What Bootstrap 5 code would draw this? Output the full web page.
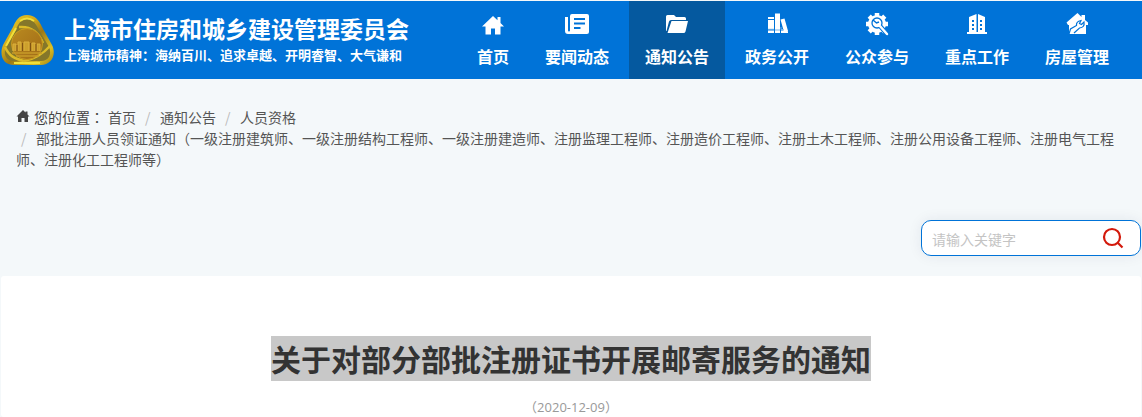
<!DOCTYPE html>
<html lang="zh-CN">
<head>
<meta charset="utf-8">
<meta name="viewport" content="width=device-width, initial-scale=1">
<title>关于对部分部批注册证书开展邮寄服务的通知</title>
<link href="https://cdn.jsdelivr.net/npm/bootstrap@5.3.0/dist/css/bootstrap.min.css" rel="stylesheet">
<style>
  body {
    background: #f4f8fa;
    color: #444;
    font-family: "Open Sans", "Noto Sans CJK SC", sans-serif;
    font-size: 14px;
    line-height: 21px;
  }
  .site-bar { background: #0073d8; border-top: 1px solid #f4f8fa; }
  .brand-link { color: #fff; font-family: "Noto Sans CJK SC", sans-serif; font-weight: 700; }
  .brand-title { font-size: 23px; line-height: 30px; }
  .brand-motto { font-size: 13px; line-height: 24px; }
  .main-menu { gap: 4px; padding-right: 17px; }
  .main-menu .nav-link {
    color: #fff;
    font: 700 16px/24px "Noto Sans CJK SC", sans-serif;
    padding: 11px 16px;
    gap: 8px;
  }
  .main-menu .nav-link:hover, .main-menu .nav-link.active { background: #05599f; }
  .main-menu svg { fill: currentColor; }
  .crumbs { padding: 28px 16px 0; font-family: "Noto Sans CJK SC", sans-serif; }
  .crumbs .breadcrumb { column-gap: 4px; margin: 0; }
  .crumbs a { color: #555; text-decoration: none; }
  .crumbs .breadcrumb-item + .breadcrumb-item { padding: 0; }
  .crumbs .breadcrumb-item + .breadcrumb-item::before {
    float: none; display: inline-block; width: 20px; padding: 0 0 0 5px; color: #bbb;
  }
  .finder {
    width: 220px; height: 36px; margin: 50px 1px 20px;
    border: 1px solid #0073d8; border-radius: 10px; background: #fff;
    box-shadow: 0 0 14px rgba(0, 40, 80, .08);
  }
  .finder input { font: 14px/20px "Noto Sans CJK SC", sans-serif; padding: 2px 0 0 10px; min-width: 0; }
  .finder input::placeholder { color: #c4c4c4; opacity: 1; }
  .finder button { padding: 0 16px 0 0; }
  .article { background: #fff; margin: 0 1px; padding: 60px 16px 0; border-radius: 3px; }
  .article h1 { font: 700 30px/45px "Noto Sans CJK SC", sans-serif; color: #333; }
  .article h1 span { background: #c8c8c8; display: inline-block; }
  .article time { font-size: 13px; line-height: 20px; color: #999; margin-top: 16px; }
</style>
<script src="https://cdn.jsdelivr.net/npm/bootstrap@5.3.0/dist/js/bootstrap.bundle.min.js"></script>
</head>
<body>
<header class="site-bar d-flex flex-wrap align-items-center">
  <a href="#" class="brand-link d-flex align-items-center text-decoration-none gap-2">
    <svg width="56" height="54" viewBox="0 0 56 54" aria-hidden="true">
      <defs>
        <linearGradient id="gold" x1="0" y1="0" x2="1" y2="1">
          <stop offset="0" stop-color="#e8d028"/><stop offset=".35" stop-color="#d2aa1c"/>
          <stop offset=".55" stop-color="#9c7816"/><stop offset=".8" stop-color="#dcc024"/><stop offset="1" stop-color="#9a7a14"/>
        </linearGradient>
        <linearGradient id="bronze" x1="0" y1="0" x2="1" y2="1">
          <stop offset="0" stop-color="#b98a20"/><stop offset="1" stop-color="#a06a16"/>
        </linearGradient>
      </defs>
      <path d="M27 2C35 2 39 7 42 14L52 32C57 42 51 52 41 52H14C3 52-1 42 3 32L13 14C16 7 19 2 27 2Z" fill="url(#gold)"/>
      <path d="M27 6C33 6 36 11 39 17L49 34C52 41 49 48 41 48H14C6 48 3 41 6 34L16 17C18 11 21 6 27 6Z" fill="#85772a"/>
      <path d="M16 15 6 33M20 8Q27 3 34 8M14 50H40" fill="none" stroke="#f0e03a" stroke-width="2"/>
      <path d="M19 14C30 13 38 18 43 30M50 33C42 42 35 46 24 48M5 34C9 43 15 46 24 48" fill="none" stroke="#dcbc28" stroke-width="2.500"/>
      <circle cx="27" cy="31" r="15.500" fill="url(#bronze)" stroke="#c79a20"/>
      <path d="M13 38V31H16V38M18 38V29H21V38M24 38V29H29V38M32 38V30H35V38M37 38V31H40V38" fill="#cda02c" stroke="#dab03c"/>
      <path d="M12 40H42M16 43H39" fill="none" stroke="#c79a28" stroke-width="1.500"/>
      <path d="M17 32V38M22.500 30V38M30.500 30V38M36 31V38" stroke="#805212"/>
    </svg>
    <span class="d-block">
      <span class="brand-title d-block">上海市住房和城乡建设管理委员会</span>
      <span class="brand-motto d-block">上海城市精神：海纳百川、追求卓越、开明睿智、大气谦和</span>
    </span>
  </a>
  <nav class="ms-auto" aria-label="主导航">
    <ul class="main-menu nav">
      <li class="nav-item"><a href="#" class="nav-link d-flex flex-column align-items-center">
        <svg width="24" height="24" viewBox="0 0 24 24" aria-hidden="true"><path d="M12 4 1 14.500h3.500V22.500h5.500V16.500h4V22.500h5.500V14.500H23L19.500 11V5h-3v3.200z"/></svg>首页</a></li>
      <li class="nav-item"><a href="#" class="nav-link d-flex flex-column align-items-center">
        <svg width="24" height="24" viewBox="0 0 24 24" aria-hidden="true"><path fill-rule="evenodd" d="M7 2H22Q24 2 24 4V20Q24 22 22 22H3Q0 22 0 19V5H3V18.500Q3 19.500 4 19.500Q5 19.500 5 18.500V4Q5 2 7 2ZM9 6V8H20V6ZM9 10.500V12.500H20V10.500ZM9 15V17H15.500V15Z"/></svg>要闻动态</a></li>
      <li class="nav-item"><a href="#" class="nav-link active d-flex flex-column align-items-center" aria-current="page">
        <svg width="24" height="24" viewBox="0 0 24 24" aria-hidden="true"><path d="M1 19V4.500Q1 3 2.500 3H9L11 5H19.500Q21 5 21 6.500V8H6Q4.500 8 4 9.500L1.500 19ZM6.500 9H23L20.500 19.500Q20 21 18.500 21H2.500Z"/></svg>通知公告</a></li>
      <li class="nav-item"><a href="#" class="nav-link d-flex flex-column align-items-center">
        <svg width="24" height="24" viewBox="0 0 24 24" aria-hidden="true"><path d="M3 5h6v2H3zM3 8h6v9H3zM3 18.500h6V21H3zM10 1.500h5V21h-5zM15.500 7.500 19.500 6.500 23 19l-4 1zM16 18.500H23V21H16z"/><path d="M3 17.300H9M10 18H15M16 15v2.500h2.500" fill="none" stroke="#75b3ea" stroke-width="1"/></svg>政务公开</a></li>
      <li class="nav-item"><a href="#" class="nav-link d-flex flex-column align-items-center">
        <svg width="24" height="24" viewBox="0 0 24 24" aria-hidden="true">
          <circle cx="12" cy="12" r="9"/><path d="M12 1V23M1 12H23M4.200 4.200 19.800 19.800M4.200 19.800 19.800 4.200" stroke="currentColor" stroke-width="4.500"/>
          <circle cx="12" cy="11" r="5" fill="currentColor" stroke="#0073d8" stroke-width="1.300"/>
          <path d="m8 8 3.500 3 2.500-1" fill="none" stroke="#0073d8" stroke-width="1.500"/>
          <path d="m15 14 7 8" stroke="#0073d8" stroke-width="4.500"/><path d="m14 13 8 9" stroke="currentColor" stroke-width="2.500" stroke-linecap="round"/>
        </svg>公众参与</a></li>
      <li class="nav-item"><a href="#" class="nav-link d-flex flex-column align-items-center">
        <svg width="24" height="24" viewBox="0 0 24 24" aria-hidden="true"><path fill-rule="evenodd" d="M4 5 11.500 2V20H13V2L20 5V20H22V22H2V20H4ZM7 8V10H9V8ZM7 12V14H9V12ZM7 16V18H9V16ZM15 8V10H17V8ZM15 12V14H17V12ZM15 16V18H17V16Z"/></svg>重点工作</a></li>
      <li class="nav-item"><a href="#" class="nav-link d-flex flex-column align-items-center">
        <svg width="24" height="24" viewBox="0 0 24 24" aria-hidden="true"><path d="M12.500 1 1.500 10.500 3 13H4V22H21V13H23V10.500L20 8V3H16.500V5Z"/><path d="M4 22 5.500 17 11.500 13.500Q11 9.500 16 8.500L14.500 11.500 16.500 12.500 19 10Q20 15.500 14.500 16L9 21" fill="none" stroke="#0073d8" stroke-width="1.200"/></svg>房屋管理</a></li>
    </ul>
  </nav>
</header>

<main>
  <nav class="crumbs" aria-label="breadcrumb">
    <ol class="breadcrumb">
      <li class="d-flex align-items-start gap-1">
        <svg width="14" height="18" viewBox="0 0 14 18" aria-hidden="true"><path fill="#444" d="M7 3 .5 9.500H2V15H5.500V11H8.500V15H12V9.500H13.500L11.500 7.500V4.500H9.500V5.500Z"/></svg>
        <span>您的位置<span lang="zh-TW">：</span></span>
      </li>
      <li class="breadcrumb-item"><a href="#">首页</a></li>
      <li class="breadcrumb-item"><a href="#">通知公告</a></li>
      <li class="breadcrumb-item"><a href="#">人员资格</a></li>
      <li class="breadcrumb-item"><a href="#">部批注册人员领证通知（一级注册建筑师、一级注册结构工程师、一级注册建造师、注册监理工程师、注册造价工程师、注册土木工程师、注册公用设备工程师、注册电气工程师、注册化工工程师等）</a></li>
    </ol>
  </nav>

  <form class="finder d-flex align-items-center ms-auto" role="search">
    <input type="text" class="flex-grow-1 border-0 bg-transparent" placeholder="请输入关键字" aria-label="请输入关键字">
    <button type="button" class="btn border-0 d-flex" aria-label="搜索">
      <svg width="22" height="22" viewBox="0 0 22 22" fill="none" stroke="#d3190b" stroke-width="2.200" aria-hidden="true"><circle cx="10" cy="10" r="8"/><path d="m15.500 15.500 5 5"/></svg>
    </button>
  </form>

  <article class="article text-center">
    <h1 class="m-0"><span>关于对部分部批注册证书开展邮寄服务的通知</span></h1>
    <time class="d-block" datetime="2020-12-09">（2020-12-09）</time>
  </article>
</main>
</body>
</html>
